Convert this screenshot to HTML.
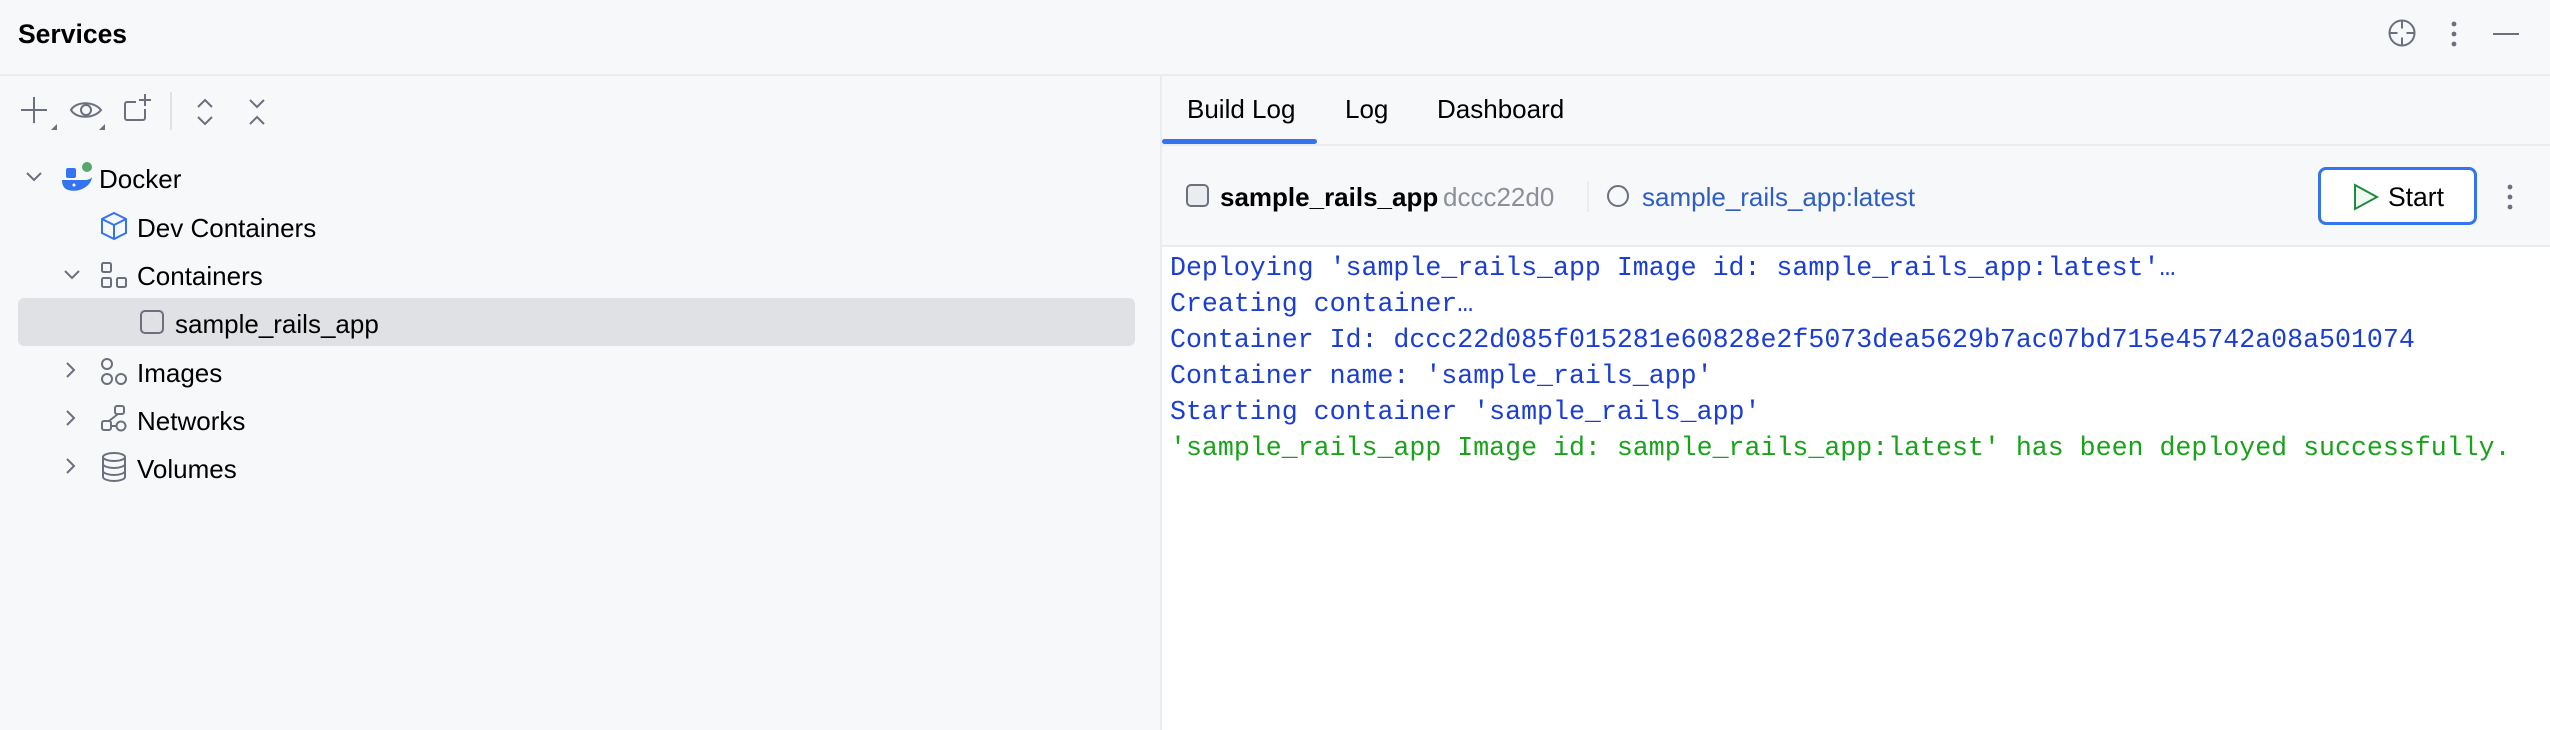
<!DOCTYPE html>
<html><head><meta charset="utf-8"><style>
*{margin:0;padding:0;box-sizing:border-box}
body{width:2550px;height:730px;background:#f7f8fa;font-family:"Liberation Sans",Arial,sans-serif;position:relative;overflow:hidden;color:#000}
.a{position:absolute}
.t{font-size:26px;line-height:30px;white-space:nowrap}
.mono{font-family:"Liberation Mono",monospace;font-size:26.6px;line-height:36px;white-space:pre;position:absolute;left:1170px}
svg{position:absolute;overflow:visible}
</style></head><body>
<div class="a t" style="left:18px;top:19px;font-weight:bold;font-size:26.5px">Services</div>
<svg style="left:2388px;top:19px" width="28" height="28" viewBox="0 0 28 28" fill="none" stroke="#6c707e" stroke-width="2"><circle cx="14" cy="14" r="12.5"/><path d="M14 1.5v8M14 18.5v8M1.5 14h8M18.5 14h8"/></svg>
<svg style="left:2450px;top:20px" width="8" height="28" fill="#6c707e"><circle cx="4" cy="4" r="2.4"/><circle cx="4" cy="14" r="2.4"/><circle cx="4" cy="24" r="2.4"/></svg>
<div class="a" style="left:2493px;top:33px;width:26px;height:2px;background:#6c707e"></div>
<div class="a" style="left:0;top:74px;width:2550px;height:2px;background:#ebecf0"></div>
<div class="a" style="left:1160px;top:76px;width:2px;height:654px;background:#ebecf0"></div>
<svg style="left:18px;top:96px" width="40" height="36" fill="none" stroke="#6c707e" stroke-width="2"><path d="M3 14h26M16 1v26"/><path d="M33 34h6v-6z" fill="#6c707e" stroke="none"/></svg>
<svg style="left:70px;top:96px" width="36" height="36" fill="none" stroke="#6c707e" stroke-width="2"><path d="M1 14C6 5 24 5 31 14C24 23 6 23 1 14z"/><circle cx="16" cy="14" r="5"/><path d="M29 34h6v-6z" fill="#6c707e" stroke="none"/></svg>
<svg style="left:122px;top:94px" width="34" height="34" fill="none" stroke="#6c707e" stroke-width="2"><path d="M14 8H5a2 2 0 0 0-2 2v14a2 2 0 0 0 2 2h16a2 2 0 0 0 2-2v-9"/><path d="M23 0v12M17 6h12"/></svg>
<div class="a" style="left:170px;top:92px;width:2px;height:38px;background:#dfe1e5"></div>
<svg style="left:196px;top:98px" width="18" height="28" fill="none" stroke="#6c707e" stroke-width="2"><path d="M2 9l7-7 7 7M2 19l7 7 7-7"/></svg>
<svg style="left:248px;top:98px" width="18" height="28" fill="none" stroke="#6c707e" stroke-width="2"><path d="M2 2l7 7 7-7M2 26l7-7 7 7"/></svg>
<div class="a" style="left:18px;top:298px;width:1117px;height:48px;background:#dfe1e5;border-radius:6px"></div>
<svg style="left:26px;top:172px" width="16" height="10" fill="none" stroke="#6c707e" stroke-width="2"><path d="M1 1l7 7 7-7"/></svg>
<svg style="left:62px;top:162px" width="32" height="30"><rect x="4" y="6" width="10" height="10" rx="2" fill="#3574f0"/><circle cx="25" cy="5" r="5" fill="#55a76a"/><path d="M0 18h22q6 0 8-3q-1 8-10 12q-6 3-14 1q-6-2-6-10z" fill="#3574f0"/><circle cx="12" cy="23" r="1.5" fill="#fff"/></svg>
<div class="a t" style="left:99px;top:164px">Docker</div>
<svg style="left:100px;top:212px" width="28" height="28" fill="none" stroke="#3574f0" stroke-width="2"><path d="M14 1l12 6v14l-12 6-12-6V7z"/><path d="M2 7l12 6 12-6M14 13v14"/></svg>
<div class="a t" style="left:137px;top:213px">Dev Containers</div>
<svg style="left:64px;top:270px" width="16" height="10" fill="none" stroke="#6c707e" stroke-width="2"><path d="M1 1l7 7 7-7"/></svg>
<svg style="left:101px;top:262px" width="28" height="28" fill="none" stroke="#6c707e" stroke-width="2"><rect x="1" y="1" width="9" height="9" rx="1.5"/><rect x="1" y="16" width="9" height="9" rx="1.5"/><rect x="16" y="16" width="9" height="9" rx="1.5"/></svg>
<div class="a t" style="left:137px;top:261px">Containers</div>
<svg style="left:140px;top:310px" width="24" height="24" fill="none" stroke="#6c707e" stroke-width="2"><rect x="1" y="1" width="22" height="22" rx="4"/></svg>
<div class="a t" style="left:175px;top:309px">sample_rails_app</div>
<svg style="left:66px;top:362px" width="10" height="16" fill="none" stroke="#6c707e" stroke-width="2"><path d="M1 1l7 7-7 7"/></svg>
<svg style="left:101px;top:358px" width="28" height="28" fill="none" stroke="#6c707e" stroke-width="2"><circle cx="6" cy="6" r="5"/><circle cx="6" cy="21" r="5"/><circle cx="20" cy="21" r="5"/></svg>
<div class="a t" style="left:137px;top:358px">Images</div>
<svg style="left:66px;top:410px" width="10" height="16" fill="none" stroke="#6c707e" stroke-width="2"><path d="M1 1l7 7-7 7"/></svg>
<svg style="left:101px;top:405px" width="28" height="28" fill="none" stroke="#6c707e" stroke-width="2"><rect x="14" y="1" width="9" height="8" rx="2"/><rect x="1" y="16" width="9" height="9" rx="2"/><circle cx="20" cy="21" r="4.5"/><path d="M17 9l-9 7M10 21h5"/></svg>
<div class="a t" style="left:137px;top:406px">Networks</div>
<svg style="left:66px;top:458px" width="10" height="16" fill="none" stroke="#6c707e" stroke-width="2"><path d="M1 1l7 7-7 7"/></svg>
<svg style="left:102px;top:452px" width="26" height="30" fill="none" stroke="#6c707e" stroke-width="2"><ellipse cx="12" cy="5" rx="11" ry="4"/><path d="M1 5v20c0 2 5 4 11 4s11-2 11-4V5M1 12c0 2 5 4 11 4s11-2 11-4M1 19c0 2 5 4 11 4s11-2 11-4"/></svg>
<div class="a t" style="left:137px;top:454px">Volumes</div>
<div class="a t" style="left:1187px;top:94px">Build Log</div>
<div class="a t" style="left:1345px;top:94px">Log</div>
<div class="a t" style="left:1437px;top:94px">Dashboard</div>
<div class="a" style="left:1162px;top:139px;width:155px;height:5px;background:#3574f0;border-radius:3px"></div>
<div class="a" style="left:1162px;top:144px;width:1388px;height:2px;background:#ebecf0"></div>
<svg style="left:1186px;top:184px" width="24" height="24" fill="none" stroke="#6c707e" stroke-width="2"><rect x="1" y="1" width="21" height="21" rx="4" fill="#ebecf0"/></svg>
<div class="a t" style="left:1220px;top:182px;font-weight:bold">sample_rails_app</div>
<div class="a t" style="left:1443px;top:182px;color:#8c8f99">dccc22d0</div>
<div class="a" style="left:1587px;top:182px;width:2px;height:30px;background:#ebecf0"></div>
<svg style="left:1607px;top:185px" width="24" height="24" fill="none" stroke="#6c707e" stroke-width="2"><circle cx="11" cy="11" r="10"/></svg>
<div class="a t" style="left:1642px;top:182px;color:#2e5ec3">sample_rails_app:latest</div>
<div class="a" style="left:2318px;top:167px;width:159px;height:58px;border:3px solid #3574f0;border-radius:8px;background:#fff"></div>
<svg style="left:2353px;top:183px" width="26" height="28" fill="#effaf1" stroke="#208a3c" stroke-width="2"><path d="M2 2l22 12-22 12z"/></svg>
<div class="a t" style="left:2388px;top:182px;font-size:26.5px">Start</div>
<svg style="left:2506px;top:183px" width="8" height="28" fill="#6c707e"><circle cx="4" cy="4" r="2.4"/><circle cx="4" cy="14" r="2.4"/><circle cx="4" cy="24" r="2.4"/></svg>
<div class="a" style="left:1162px;top:245px;width:1388px;height:2px;background:#ebecf0"></div>
<div class="a" style="left:1162px;top:247px;width:1388px;height:483px;background:#fff"></div>
<div class="mono" style="top:250px;color:#1a3dd6">Deploying 'sample_rails_app Image id: sample_rails_app:latest'…</div>
<div class="mono" style="top:286px;color:#1a3dd6">Creating container…</div>
<div class="mono" style="top:322px;color:#1a3dd6">Container Id: dccc22d085f015281e60828e2f5073dea5629b7ac07bd715e45742a08a501074</div>
<div class="mono" style="top:358px;color:#1a3dd6">Container name: 'sample_rails_app'</div>
<div class="mono" style="top:394px;color:#1a3dd6">Starting container 'sample_rails_app'</div>
<div class="mono" style="top:430px;color:#1aa31a">'sample_rails_app Image id: sample_rails_app:latest' has been deployed successfully.</div>
</body></html>
